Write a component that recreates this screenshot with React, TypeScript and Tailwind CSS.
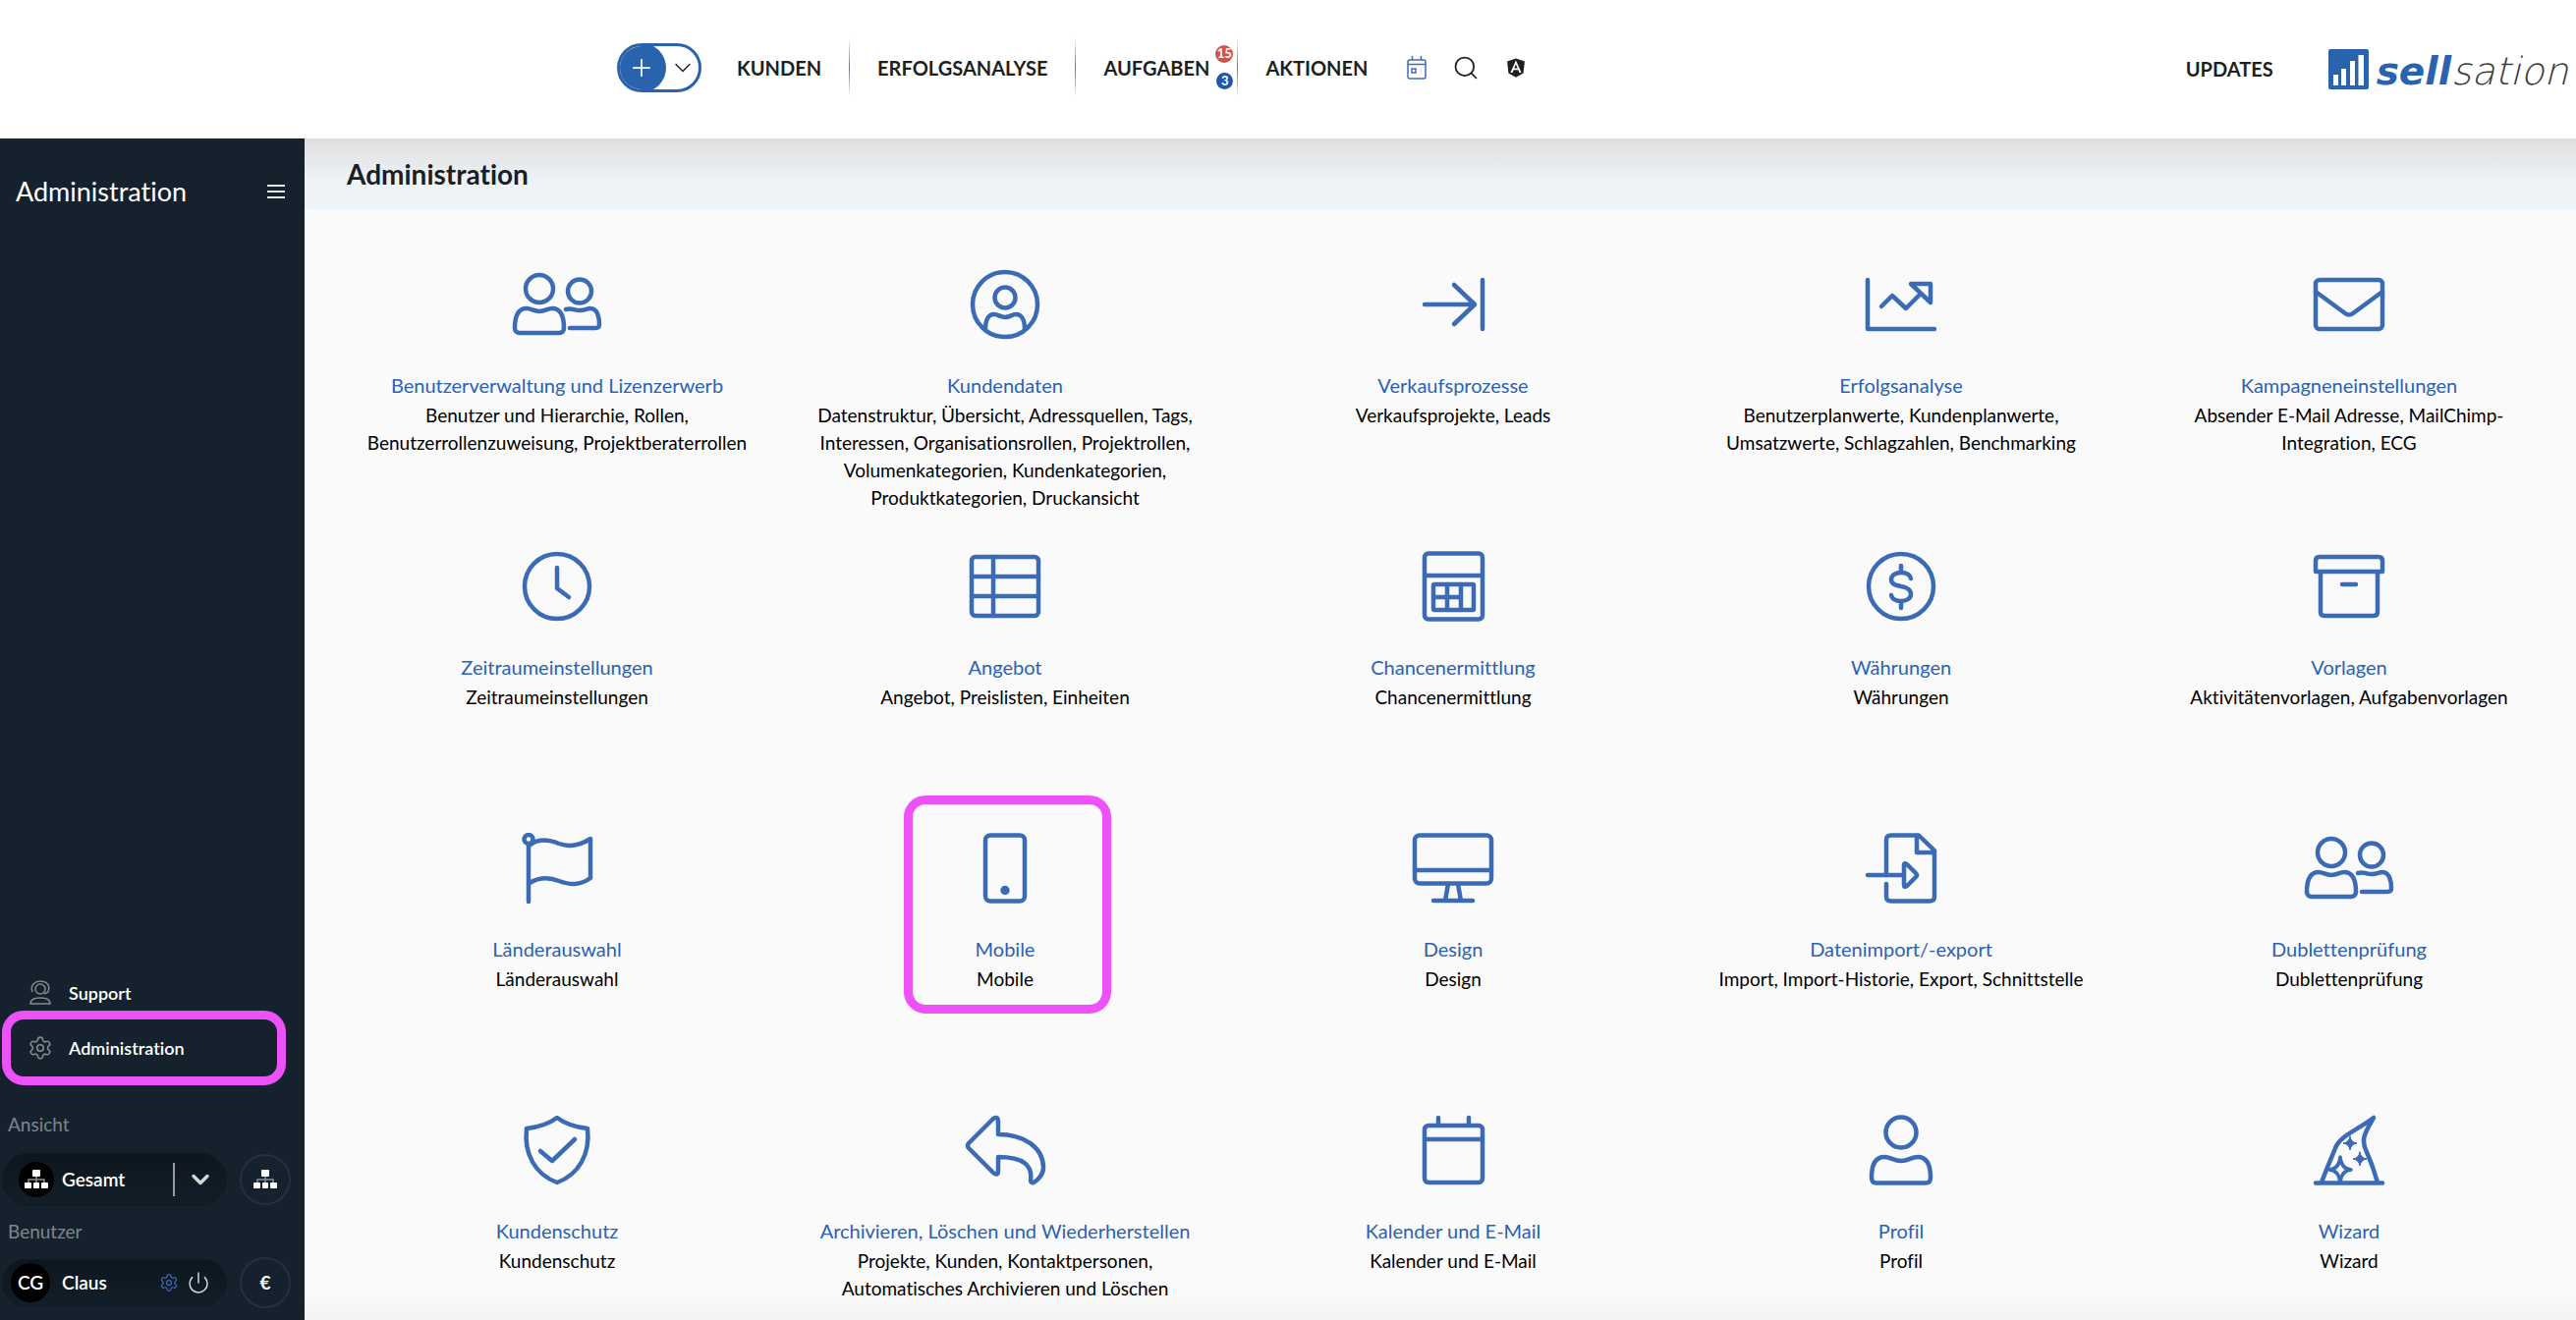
import type { ReactNode } from "react";
import { FaAngular } from "react-icons/fa";
import { ChevronDown, Plus, Power, Search, Settings } from "lucide-react";

const UsersIcon = () => (
  <>
    <circle cx="30" cy="20" r="14" />
    <circle cx="71" cy="22.5" r="12" />
    <path d="M5 60C5 49 8 40 17 40C22 40 24 43 30 43C36 43 38 40 43 40C52 40 55 49 55 60c0 3-2 5-5 5H10c-3 0-5-2-5-5Z" />
    <path d="M57 41C63 39 65 42 71 42C77 42 78 40 82 40C89 40 91 49 91 56c0 3-1 4-4 4H61" />
  </>
);

const tiles: { title: string; text: string; icon: ReactNode; marked?: boolean }[] = [
  {
    title: "Benutzerverwaltung und Lizenzerwerb",
    text: "Benutzer und Hierarchie, Rollen, Benutzerrollenzuweisung, Projektberaterrollen",
    icon: <UsersIcon />,
  },
  {
    title: "Kundendaten",
    text: "Datenstruktur, Übersicht, Adressquellen, Tags, Interessen, Organisationsrollen, Projektrollen, Volumenkategorien, Kundenkategorien, Produktkategorien, Druckansicht",
    icon: (
      <>
        <circle cx="48" cy="36" r="33" />
        <circle cx="48" cy="29" r="10.5" />
        <path d="M28 61C28 52 31 46 37 46C41 46 43 49 48 49C53 49 55 46 59 46C65 46 68 52 68 61" />
      </>
    ),
  },
  {
    title: "Verkaufsprozesse",
    text: "Verkaufsprojekte, Leads",
    icon: <path d="M78 11V61M19 36H70M49 16L70 36L49 56" />,
  },
  {
    title: "Erfolgsanalyse",
    text: "Benutzerplanwerte, Kundenplanwerte, Umsatzwerte, Schlagzahlen, Benchmarking",
    icon: <path d="M14 11V61H82M28 38L39 27L53 40L68 25M58 15H78V34Z" />,
  },
  {
    title: "Kampagneneinstellungen",
    text: "Absender E-Mail Adresse, MailChimp-Integration, ECG",
    icon: (
      <>
        <rect x="14" y="11" width="68" height="50" rx="4" />
        <path d="M14 23L44 45Q48 48 52 45L82 23" />
      </>
    ),
  },
  {
    title: "Zeitraumeinstellungen",
    text: "Zeitraumeinstellungen",
    icon: (
      <>
        <circle cx="48" cy="36" r="33" />
        <path d="M48 17V38L60 47" />
      </>
    ),
  },
  {
    title: "Angebot",
    text: "Angebot, Preislisten, Einheiten",
    icon: (
      <>
        <rect x="14" y="6" width="68" height="60" rx="4" />
        <path d="M36 6V66M14 26H82M14 46H82" />
      </>
    ),
  },
  {
    title: "Chancenermittlung",
    text: "Chancenermittlung",
    icon: (
      <>
        <rect x="19" y="2.500" width="59" height="67" rx="4" />
        <rect x="28" y="34" width="41" height="26" rx="1" />
        <path d="M19 25H78M42 34V60M56 34V60M28 47H56" />
      </>
    ),
  },
  {
    title: "Währungen",
    text: "Währungen",
    icon: (
      <>
        <circle cx="48" cy="36" r="33" />
        <path d="M58 28C57 24 53 22 48 22C42 22 38 25 38 29C38 34 43 35 48 36C54 37 58 40 58 44C58 48 54 51 48 51C42 51 39 49 38 45M48 15V22M48 51V58" />
      </>
    ),
  },
  {
    title: "Vorlagen",
    text: "Aktivitätenvorlagen, Aufgabenvorlagen",
    icon: <path d="M14 21V10Q14 6 18 6H78Q82 6 82 10V21ZM19 21V62Q19 66 23 66H73Q77 66 77 62V21M41 34H55" />,
  },
  {
    title: "Länderauswahl",
    text: "Länderauswahl",
    icon: (
      <>
        <circle cx="19" cy="6.5" r="4.5" />
        <path d="M19 11V70M21 12C30 5 40 7 50 11C61 15 71 13 82 6V46C71 54 61 53 50 49C40 45 30 45 20 51" />
      </>
    ),
  },
  {
    title: "Mobile",
    text: "Mobile",
    marked: true,
    icon: (
      <>
        <rect x="28" y="2.500" width="40" height="67" rx="5" />
        <circle cx="48" cy="58.5" r="2.5" fill="currentColor" />
      </>
    ),
  },
  {
    title: "Design",
    text: "Design",
    icon: (
      <>
        <rect x="9" y="2.500" width="78" height="49" rx="5" />
        <path d="M9 38H87M43 52L40 69M53 52L56 69M28 69H68" />
      </>
    ),
  },
  {
    title: "Datenimport/-export",
    text: "Import, Import-Historie, Export, Schnittstelle",
    icon: (
      <>
        <path d="M33 43V7Q33 2.500 38 2.500H66L82 18V65Q82 69.500 77 69.500H38Q33 69.500 33 65V52" />
        <path d="M64 3V20H81M14 43H51" />
        <path d="M51 33Q51 30 54 32L63 41Q65 43 63 45L54 54Q51 56 51 53Z" />
      </>
    ),
  },
  { title: "Dublettenprüfung", text: "Dublettenprüfung", icon: <UsersIcon /> },
  {
    title: "Kundenschutz",
    text: "Kundenschutz",
    icon: <path d="M48 3Q60 12 79 14C82 40 70 61 48 69C26 61 14 40 17 14Q36 12 48 3ZM31 37L43 47L66 25" />,
  },
  {
    title: "Archivieren, Löschen und Wiederherstellen",
    text: "Projekte, Kunden, Kontaktpersonen, Automatisches Archivieren und Löschen",
    icon: (
      <path d="M11 29L36 4Q41 1 41 7V20C67 20 87 33 87 54C87 61 81 67 77 69Q74 70 74 66C76 52 67 43 41 43V57Q41 63 36 59L11 34Q9 31 11 29Z" />
    ),
  },
  {
    title: "Kalender und E-Mail",
    text: "Kalender und E-Mail",
    icon: (
      <>
        <rect x="19" y="11" width="59" height="58" rx="4" />
        <path d="M19 25H78M33 3V11M64 3V11" />
      </>
    ),
  },
  {
    title: "Profil",
    text: "Profil",
    icon: (
      <>
        <circle cx="48" cy="18" r="15.5" />
        <path d="M18 64C18 52 21 43 31 43C38 43 40 47 48 47C56 47 58 43 65 43C75 43 78 52 78 64c0 4-2 5.500-5 5.500H23c-3 0-5-1.500-5-5.500Z" />
      </>
    ),
  },
  {
    title: "Wizard",
    text: "Wizard",
    icon: (
      <>
        <path d="M14 69.500H82M20 69C24 58 30 44 34 34C38 22 56 16 73 3C63 20 60 26 66 38C70 47 74 58 77 69" />
        <path strokeWidth="3.5" d="M39 43Q40 55 50 56Q40 57 39 69Q38 57 28 56Q38 55 39 43Z" />
        <path
          fill="currentColor"
          strokeWidth="1"
          d="M59 38Q60 44 66 45Q60 46 59 52Q58 46 52 45Q58 44 59 38ZM49 22Q50 28 56 29Q50 30 49 36Q48 30 42 29Q48 28 49 22Z"
        />
      </>
    ),
  },
];

function OrgIcon() {
  return (
    <svg className="h-5 w-6" viewBox="0 0 24 20" fill="none" aria-hidden="true">
      <path d="M12 6V14M4 14V10H20V14" stroke="#8a8f94" strokeWidth="1.5" />
      <rect x="8" y="0" width="8" height="7" rx="1" fill="#fff" />
      <rect x="0" y="13" width="7" height="6" rx="1" fill="#fff" />
      <rect x="9" y="13" width="6" height="6" rx="1" fill="#fff" />
      <rect x="17" y="13" width="7" height="6" rx="1" fill="#fff" />
    </svg>
  );
}

function Separator() {
  return <span className="mx-7 h-[60px] w-px bg-linear-to-b from-transparent via-gray-500 to-transparent" />;
}

function Header() {
  return (
    <header className="flex h-[141px] shrink-0 items-start bg-white pt-[39px] text-[20px] font-bold text-[#1d1f21]">
      <nav className="ml-[628px] flex h-[60px] items-center">
        <div className="mr-9 flex h-[50px] w-[86px] items-center overflow-hidden rounded-full border-[3px] border-[#2a63ad]">
          <button
            className="-ml-[3px] flex h-[50px] w-[50px] shrink-0 items-center justify-center rounded-full bg-[#2a63ad]"
            aria-label="Neu"
          >
            <Plus className="h-7 w-7 text-white" strokeWidth={1.5} />
          </button>
          <button className="flex flex-1 justify-center" aria-label="Mehr">
            <ChevronDown className="h-7 w-7" strokeWidth={1.25} />
          </button>
        </div>
        <a href="#kunden">KUNDEN</a>
        <Separator />
        <a href="#erfolgsanalyse">ERFOLGSANALYSE</a>
        <Separator />
        <a href="#aufgaben" className="relative">
          AUFGABEN
          <span className="absolute -top-2 -right-6 flex h-[18px] w-[18px] items-center justify-center rounded-full bg-[#cf524b] text-[13px] text-white">
            15
          </span>
          <span className="absolute top-5 -right-6 flex h-[17px] w-[17px] items-center justify-center rounded-full bg-[#1f58ab] text-[13px] text-white">
            3
          </span>
        </a>
        <Separator />
        <a href="#aktionen">AKTIONEN</a>
        <div className="ml-10 flex items-center gap-[26px]">
          <button aria-label="Kalender">
            <svg className="h-6 w-5" viewBox="0 0 20 24" fill="none" stroke="#3f6db8" strokeWidth="1.5">
              <rect x="1" y="4" width="18" height="19" rx="2" />
              <path d="M1 8.5H19M5.5 0V4M14.5 0V4" />
              <rect x="5" y="13" width="4" height="4" />
            </svg>
          </button>
          <button aria-label="Suche">
            <Search className="h-7 w-7" strokeWidth={1.5} />
          </button>
          <button aria-label="Angular">
            <FaAngular className="h-[22px] w-[22px]" />
          </button>
        </div>
      </nav>
      <div className="mr-2 ml-auto flex h-[62px] items-center">
        <a href="#updates" className="mr-14">UPDATES</a>
        <a href="#start" className="flex items-end" aria-label="sellsation">
          <svg className="h-[41px] w-[41px]" viewBox="0 0 41 41" aria-hidden="true">
            <rect width="41" height="41" rx="2" fill="#2a63ad" />
            <path d="M5 26H10V37H5ZM13 20H18V37H13ZM22 12H27V37H22ZM30.500 6H36V37H30.500Z" fill="#fff" />
          </svg>
          <span className="ml-2 font-['DejaVu_Sans'] text-[39px] leading-9 font-bold text-[#2a63ad] italic">
            sell<span className="font-['DejaVu_Sans_Light','DejaVu_Sans'] font-extralight text-[#3c3c3b]">sation</span>
          </span>
        </a>
      </div>
    </header>
  );
}

function Sidebar() {
  return (
    <aside className="flex w-[310px] shrink-0 flex-col bg-[#15212c] text-[19px] text-white">
      <div className="flex items-center justify-between pt-[34px] pr-5 pl-4">
        <h2 className="text-[27px] leading-10">Administration</h2>
        <button aria-label="Menü">
          <svg className="h-4 w-[18px]" viewBox="0 0 18 16" stroke="#e5e7e8" strokeWidth="2">
            <path d="M0 2H18M0 8H18M0 14H18" />
          </svg>
        </button>
      </div>

      <nav className="mt-auto flex flex-col text-[18px] font-semibold">
        <a href="#support" className="flex h-14 items-center pl-7">
          <svg className="mr-4 h-[26px] w-[26px]" viewBox="0 0 26 26" fill="none" stroke="#84898e" strokeWidth="1.5" aria-hidden="true">
            <path d="M5 12C2 4 9 1 13 1C18 1 24 4 21 12L17 14" />
            <circle cx="13" cy="9" r="5" />
            <path d="M3 24C3 19 7 18 13 18C19 18 23 19 23 24Z" />
          </svg>
          Support
        </a>
        <a href="#administration" className="relative flex h-14 items-center pl-7">
          <Settings className="mr-4 h-[26px] w-[26px] text-[#84898e]" strokeWidth={1.5} />
          Administration
          <span className="absolute -top-2.5 left-0.5 h-[76px] w-[289px] rounded-[22px] border-[9px] border-[#ec52f8]" />
        </a>
      </nav>

      <p className="mt-9 pl-2 leading-7 text-[#7d868e]">Ansicht</p>
      <div className="mt-[15px] flex items-center justify-between pr-3.5 pl-0.5">
        <div className="flex h-[54px] w-[229px] items-center rounded-full border border-[#101920] bg-linear-to-b from-[#0d161e] to-[#121e28] pl-4">
          <span className="mr-2 flex h-9 w-9 items-center justify-center rounded-full bg-black">
            <OrgIcon />
          </span>
          <span className="font-semibold">Gesamt</span>
          <span className="ml-auto h-[34px] w-0.5 bg-[#999b9c]" />
          <button className="mr-3 ml-3" aria-label="Ansicht wählen">
            <ChevronDown className="h-7 w-7 text-[#d5d7d9]" strokeWidth={3} />
          </button>
        </div>
        <button className="flex h-[52px] w-[52px] items-center justify-center rounded-full border-2 border-[#25313c]" aria-label="Struktur">
          <OrgIcon />
        </button>
      </div>

      <p className="mt-3 pl-2 leading-7 text-[#7d868e]">Benutzer</p>
      <div className="mt-3 mb-3 flex items-center justify-between pr-3.5 pl-0.5">
        <div className="flex h-12 w-[229px] items-center rounded-full border border-[#101920] bg-linear-to-b from-[#0d161e] to-[#121e28] pl-2">
          <span className="mr-3 flex h-10 w-10 items-center justify-center rounded-full bg-black font-semibold">CG</span>
          <span className="font-semibold">Claus</span>
          <button className="mr-2 ml-auto" aria-label="Einstellungen">
            <Settings className="h-5 w-5 text-[#3f6db8]" strokeWidth={1.5} />
          </button>
          <button className="mr-4" aria-label="Abmelden">
            <Power className="h-6 w-6 text-[#d5d7d9]" strokeWidth={1.5} />
          </button>
        </div>
        <button className="flex h-[52px] w-[52px] items-center justify-center rounded-full border-2 border-[#25313c] font-bold">€</button>
      </div>
    </aside>
  );
}

export default function App() {
  return (
    <div className="flex h-screen flex-col overflow-hidden bg-[#fafafa] font-['Lato',sans-serif] [font-variant-ligatures:none]">
      <Header />
      <div className="flex min-h-0 flex-1">
        <Sidebar />
        <main className="relative min-w-0 flex-1 overflow-hidden">
          <div className="h-[72px] bg-[#eef3f7]">
            <div className="h-[42px] bg-linear-to-b from-[#dedede] to-[#eef3f7] pt-4 pl-[43px]">
              <h1 className="text-[28px] leading-10 font-bold text-[#1d1f21]">Administration</h1>
            </div>
          </div>

          <div className="grid auto-rows-fr grid-cols-5 gap-y-10 pt-[61px] pr-[3px] pl-[29px]">
            {tiles.map((tile) => (
              <div key={tile.title} className="relative flex flex-col items-center px-[30px] text-center">
                <svg
                  className="h-[72px] w-24 text-[#3a6bb4]"
                  viewBox="0 0 96 72"
                  fill="none"
                  stroke="currentColor"
                  strokeWidth="4.5"
                  strokeLinecap="round"
                  strokeLinejoin="round"
                  aria-hidden="true"
                >
                  {tile.icon}
                </svg>
                <a href="#" className="mt-8 text-[20px] leading-7 whitespace-nowrap text-[#2b62b1]">
                  {tile.title}
                </a>
                <p className="mt-[3px] text-[19px] leading-7 text-black">{tile.text}</p>
                {/* Highlight frame */}
                {tile.marked && (
                  <span className="absolute -top-[38px] left-1/2 ml-[-103px] h-[222px] w-[211px] rounded-[22px] border-[9px] border-[#ec52f8]" />
                )}
              </div>
            ))}
          </div>
          <div className="absolute inset-x-0 bottom-0 h-8 bg-linear-to-b from-transparent to-black/3" />
        </main>
      </div>
    </div>
  );
}
